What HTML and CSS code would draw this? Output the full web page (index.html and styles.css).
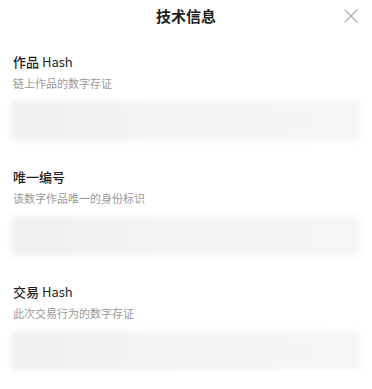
FILE: index.html
```html
<!DOCTYPE html>
<html lang="zh-CN">
<head>
<meta charset="utf-8">
<link rel="stylesheet" href="styles.css">
</head>
<body>
<div class="sheet">
  <header class="header">
    <h1 class="title">技术信息</h1>
    <button class="close" aria-label="关闭">
      <svg width="14" height="14" viewBox="0 0 14 14"><path d="M1 1L13 13M13 1L1 13" stroke="#ababab" stroke-width="1.1" fill="none" stroke-linecap="round"/></svg>
    </button>
  </header>
  <div class="content">
    <section class="item">
      <h2 class="label">作品 <span class="latin">Hash</span></h2>
      <p class="desc">链上作品的数字存证</p>
      <div class="value"></div>
    </section>
    <section class="item">
      <h2 class="label">唯一编号</h2>
      <p class="desc">该数字作品唯一的身份标识</p>
      <div class="value"></div>
    </section>
    <section class="item">
      <h2 class="label">交易 <span class="latin">Hash</span></h2>
      <p class="desc">此次交易行为的数字存证</p>
      <div class="value"></div>
    </section>
  </div>
</div>
</body>
</html>
```
FILE: styles.css
```css
html, body {
  margin: 0;
  padding: 0;
  background: #ffffff;
}
body {
  font-family: "Noto Sans CJK SC", "Noto Sans", sans-serif;
  color: #1a1a1a;
  overflow: hidden;
}
.sheet {
  width: 372px;
}
.header {
  position: relative;
  height: 32px;
  display: flex;
  align-items: center;
  justify-content: center;
}
.title {
  margin: 0;
  font-size: 15px;
  line-height: 32px;
  font-weight: 600;
  color: #1f1f1f;
}
.close {
  position: absolute;
  right: 14px;
  top: 9px;
  width: 14px;
  height: 14px;
  padding: 0;
  border: 0;
  background: none;
  display: flex;
}
.content {
  padding: 21px 12px 0;
  display: flex;
  flex-direction: column;
  gap: 27px;
}
.item {
  display: flex;
  flex-direction: column;
}
.label {
  margin: 0;
  padding-left: 1px;
  font-size: 13px;
  line-height: 18px;
  font-weight: 500;
  color: #1f1f1f;
}
.latin {
  font-weight: 400;
}
.desc {
  margin: 4px 0 0;
  padding-left: 1px;
  font-size: 11px;
  line-height: 16px;
  color: #9a9a9a;
}
.value {
  margin-top: 10px;
  height: 40px;
  border-radius: 4px;
  background: linear-gradient(90deg, #efefef 0%, #f1f1f1 20%, #f5f5f5 50%, #f6f6f6 100%);
  filter: blur(3px);
}
```
